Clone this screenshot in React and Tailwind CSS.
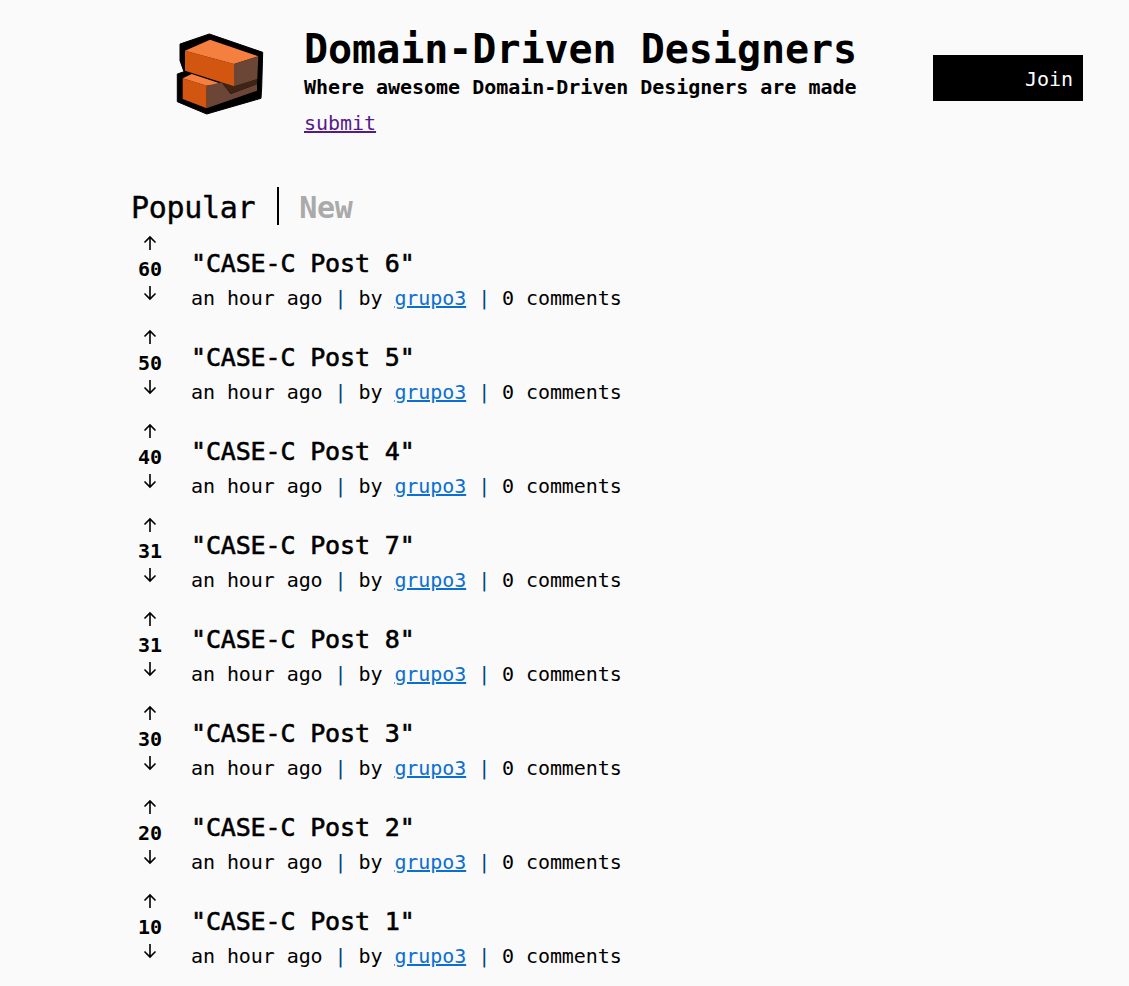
const posts = [
  { title: "CASE-C Post 6", points: 60 },
  { title: "CASE-C Post 5", points: 50 },
  { title: "CASE-C Post 4", points: 40 },
  { title: "CASE-C Post 7", points: 31 },
  { title: "CASE-C Post 8", points: 31 },
  { title: "CASE-C Post 3", points: 30 },
  { title: "CASE-C Post 2", points: 20 },
  { title: "CASE-C Post 1", points: 10 },
]

const Brick = () => (
  <svg width="90" height="84" viewBox="0 0 90 84" className="block">
    <path d="M34.3 2 L87.7 20.3 L86.7 55 L86 66.3 L31.7 82 L2.3 69.7 L2.3 42 L9 39.7 L5 28.7 L5 12 Z" fill="#000" stroke="#000" strokeLinejoin="round" />
    <path d="M7.7 46.3 L31.7 53.7 L31.7 76.3 L7.7 67 Z" fill="#d2560f" />
    <path d="M7.7 46.3 L16.7 42 L47 52 L31.7 53.7 Z" fill="#f47f3e" />
    <path d="M31.7 53.7 L46.7 50.3 L55.7 62 L82 52 L82 58.7 L31.7 76.3 Z" fill="#6b4535" />
    <path d="M46.7 50.3 L59 54.3 L82.3 47 L82 52 L55.7 62 Z" fill="#3d2415" />
    <path d="M10 18.7 L59 32 L59 54.3 L10 38.7 Z" fill="#d2560f" />
    <path d="M10 18.7 L35 7.7 L83.3 24.3 L59 32 Z" fill="#f47f3e" />
    <path d="M59 32 L83.3 24.3 L82.3 47 L59 54.3 Z" fill="#6b4535" />
  </svg>
)

const ArrowIcon = ({ down }) => (
  <svg width="16" height="16" viewBox="0 0 16 16" fill="none" stroke="#000" strokeWidth="1.6" className={down ? "block rotate-180" : "block"}>
    <path d="M8 15 L8 2 M2.5 7.5 L8 2 L13.5 7.5" />
  </svg>
)

const PostRow = ({ post }) => (
  <div className="flex h-[94px] items-start">
    <div className="mt-[2px] flex w-[38px] shrink-0 flex-col items-center">
      <ArrowIcon />
      <div className="mt-[3px] mb-[1px] text-[20px] leading-[30px] font-bold text-black">{post.points}</div>
      <ArrowIcon down />
    </div>
    <div className="mt-[13px] ml-[22px]">
      <div className="text-[25px] leading-[36px] tracking-[-0.006em] text-black [-webkit-text-stroke:0.6px_#000]">"{post.title}"</div>
      <div className="mt-[2px] text-[20px] leading-[28px] tracking-[-0.004em] text-black">
        an hour ago <span className="text-[#00457a]">|</span> by{" "}
        <a href="#" className="text-[#0a6fd0] underline">grupo3</a>{" "}
        <span className="text-[#00457a]">|</span> 0 comments
      </div>
    </div>
  </div>
)

export default function App() {
  return (
    <div className="min-h-[986px] overflow-hidden bg-[#fafafa] pl-[131px] font-['DejaVu_Sans_Mono',monospace] tracking-[-0.002em] whitespace-nowrap">
      <header className="flex items-start pt-[24px]">
        <div className="mt-[8px] ml-[44px] w-[129px] shrink-0">
          <Brick />
        </div>
        <div className="w-[552px] shrink-0">
          <h1 className="text-[40px] leading-[50px] font-bold text-black">Domain-Driven Designers</h1>
          <p className="text-[20px] leading-[26px] font-bold text-black">Where awesome Domain-Driven Designers are made</p>
          <a href="#" className="mt-[10px] block text-[20px] leading-[26px] text-[#551a8b] underline">submit</a>
        </div>
        <button className="mt-[31px] ml-[77px] h-[46px] w-[150px] shrink-0 bg-black pt-[1px] pr-[10px] text-right text-[20px] text-white">Join</button>
      </header>

      <div className="mt-[51px] flex h-[38px] items-start">
        <span className="h-[38px] text-[30px] leading-[42px] tracking-[-0.01em] text-black [-webkit-text-stroke:0.4px_#000]">Popular</span>
        <span className="mr-[20px] ml-[22px] h-[38px] w-[2px] bg-black" />
        <span className="h-[38px] text-[30px] leading-[42px] font-bold tracking-[-0.01em] text-[#aaaaaa]">New</span>
      </div>

      <div className="mt-[8px]">
        {posts.map((post) => (
          <PostRow key={post.title} post={post} />
        ))}
      </div>
    </div>
  )
}
